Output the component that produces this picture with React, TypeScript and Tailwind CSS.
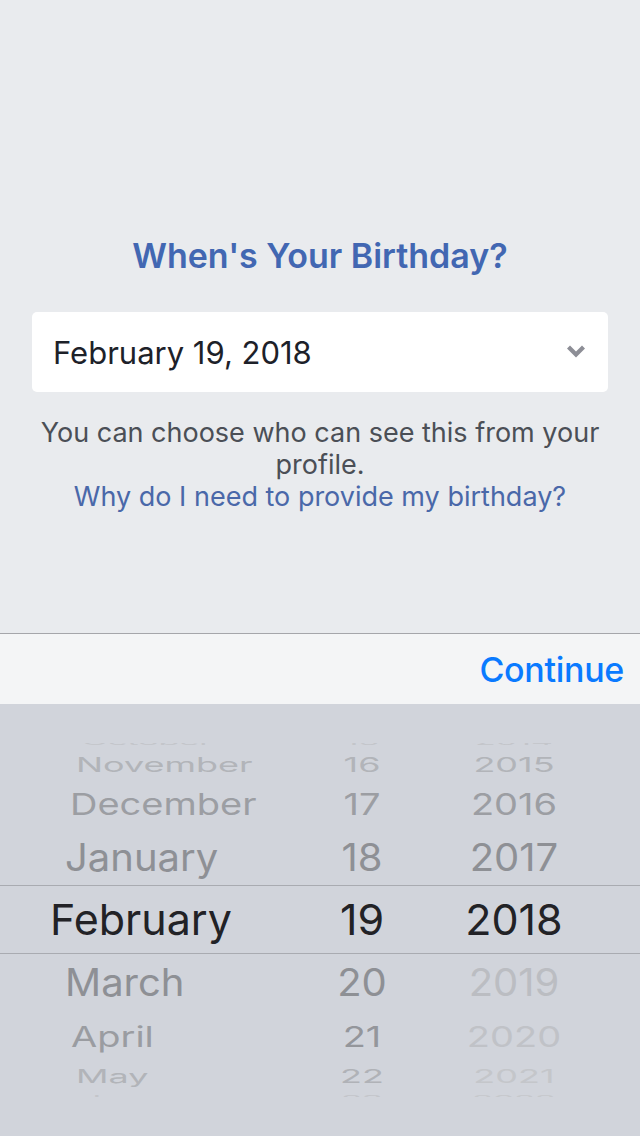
import * as React from 'react'

type Row = {
  month: string
  day: string
  year: string
  h: string
  size: string
  sy: string
  pl: string
  monthColor: string
  dayColor: string
  yearColor: string
}

// picker rows, top to bottom; selected row is February
const rows: Row[] = [
  { month: 'October', day: '15', year: '2014', h: 'h-[22px]', size: 'text-[34px]', sy: 'scale-y-[0.25]', pl: 'pl-[82px]', monthColor: 'text-[#c3c5ca]', dayColor: 'text-[#c3c5ca]', yearColor: 'text-[#c3c5ca]' },
  { month: 'November', day: '16', year: '2015', h: 'h-[24px]', size: 'text-[36px]', sy: 'scale-y-[0.55]', pl: 'pl-[76px]', monthColor: 'text-[#b2b4b9]', dayColor: 'text-[#b2b4b9]', yearColor: 'text-[#b2b4b9]' },
  { month: 'December', day: '17', year: '2016', h: 'h-[53px]', size: 'text-[38px]', sy: 'scale-y-[0.78]', pl: 'pl-[70px]', monthColor: 'text-[#9c9ea3]', dayColor: 'text-[#9c9ea3]', yearColor: 'text-[#9c9ea3]' },
  { month: 'January', day: '18', year: '2017', h: 'h-[55px]', size: 'text-[40px]', sy: 'scale-y-[0.94]', pl: 'pl-[65px]', monthColor: 'text-[#8e9095]', dayColor: 'text-[#8e9095]', yearColor: 'text-[#8e9095]' },
  { month: 'February', day: '19', year: '2018', h: 'h-[69px]', size: 'text-[43px]', sy: 'scale-y-100', pl: 'pl-[50px]', monthColor: 'text-[#222226]', dayColor: 'text-[#222226]', yearColor: 'text-[#222226]' },
  { month: 'March', day: '20', year: '2019', h: 'h-[58px]', size: 'text-[40px]', sy: 'scale-y-[0.94]', pl: 'pl-[65px]', monthColor: 'text-[#8e9095]', dayColor: 'text-[#8e9095]', yearColor: 'text-[#bbbdc2]' },
  { month: 'April', day: '21', year: '2020', h: 'h-[50px]', size: 'text-[38px]', sy: 'scale-y-[0.74]', pl: 'pl-[71px]', monthColor: 'text-[#9a9ca1]', dayColor: 'text-[#94969b]', yearColor: 'text-[#c0c2c7]' },
  { month: 'May', day: '22', year: '2021', h: 'h-[28px]', size: 'text-[36px]', sy: 'scale-y-[0.5]', pl: 'pl-[76px]', monthColor: 'text-[#b2b4b9]', dayColor: 'text-[#b0b2b7]', yearColor: 'text-[#c4c6ca]' },
  { month: 'June', day: '23', year: '2022', h: 'h-[18px]', size: 'text-[34px]', sy: 'scale-y-[0.25]', pl: 'pl-[82px]', monthColor: 'text-[#c3c5ca]', dayColor: 'text-[#c3c5ca]', yearColor: 'text-[#c6c8cc]' },
]

function Chevron() {
  return (
    <svg width="20" height="14" viewBox="0 0 20 14" className="fill-[#8d8e96]">
      <path d="M1 3.5 L4 0.5 L10 6.5 L16 0.5 L19 3.5 L10 12.5 Z" />
    </svg>
  )
}

export default function App() {
  return (
    <div className="flex h-[1136px] w-[640px] flex-col bg-[#e9ebee] font-['Inter','Liberation_Sans',sans-serif]">
      {/* Form */}
      <div className="flex flex-1 flex-col items-center pt-[234px]">
        <h1 className="text-[34px] font-semibold leading-[44px] tracking-[0px] text-[#4267b2]">When's Your Birthday?</h1>

        <button className="mt-[34px] flex h-[80px] w-[576px] items-center justify-between rounded-[5px] bg-white pl-[21px] pr-[22px]">
          <span className="text-[31px] leading-none tracking-[0px] text-[#1d2129]">February 19, 2018</span>
          <Chevron />
        </button>

        <div className="mt-[25px] w-[590px] text-center text-[27px] leading-[32px] tracking-[0px]">
          <p className="text-[#4b4f56]">You can choose who can see this from your profile.</p>
          <a className="text-[#4a68a9]">Why do I need to provide my birthday?</a>
        </div>
      </div>

      {/* Toolbar */}
      <div className="flex h-[71px] items-center justify-end border-t border-[#a5a6aa] bg-[#f4f5f6] pr-[16px]">
        <span className="text-[34px] font-medium tracking-[-0.3px] text-[#0a7aff]">Continue</span>
      </div>

      {/* Date picker */}
      <div className="relative h-[432px] bg-[#d1d4db] pt-[39px]">
        <div className="h-[354px] overflow-hidden">
          <div className="-mt-[12px] flex flex-col">
            {rows.map((r) => {
              const selected = r.month === 'February'
              return (
                <div
                  key={r.month}
                  className={`flex ${r.h} items-center ${selected ? 'border-y border-[#a9abb1]' : ''}`}
                >
                  <div className={`flex w-[300px] ${r.pl}`}>
                    <span className={`${r.size} ${r.sy} leading-none ${r.monthColor}`}>{r.month}</span>
                  </div>
                  <div className="flex w-[124px] justify-center">
                    <span className={`${r.size} ${r.sy} leading-none ${r.dayColor}`}>{r.day}</span>
                  </div>
                  <div className="flex w-[180px] justify-center">
                    <span className={`${r.size} ${r.sy} leading-none ${r.yearColor}`}>{r.year}</span>
                  </div>
                </div>
              )
            })}
          </div>
        </div>
      </div>
    </div>
  )
}
